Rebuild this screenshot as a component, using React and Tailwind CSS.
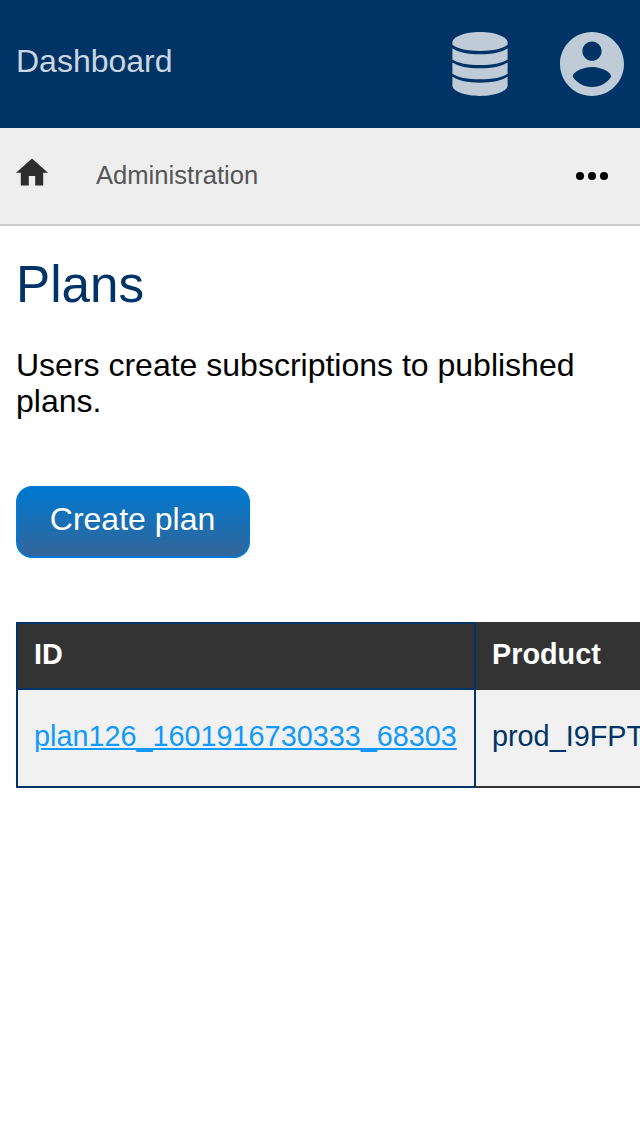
function DatabaseIcon() {
  return (
    <svg className="h-16 w-14" viewBox="0 0 56 64" fill="currentColor" aria-hidden="true">
      <path d="M.4 10.500C.4 5 12.500.1 28 .1S55.600 5 55.600 10.500v2.300C50 16.900 40.500 19 28 19S6 16.900.4 12.800z" />
      <path d="M.4 16.200C6 20.200 16 22.300 28 22.300s22-2.100 27.600-6.100v11.300C50 31.200 40.500 33 28 33S6 31.200 .4 27.500z" />
      <path d="M.4 30.400C6 34.300 16 36.300 28 36.300s22-2 27.600-5.900v11.300C50 45.500 40.500 47.300 28 47.300S6 45.500.4 41.700z" />
      <path d="M.4 44.800C6 48.600 16 50.700 28 50.700s22-2.100 27.600-5.900v8.700C55.600 59 43.500 63.900 28 63.900S.4 59 .4 53.500z" />
    </svg>
  );
}

function AccountIcon() {
  return (
    <svg className="size-16" viewBox="2 2 20 20" fill="currentColor" aria-hidden="true">
      <path d="M12 2C6.480 2 2 6.480 2 12s4.480 10 10 10 10-4.480 10-10S17.520 2 12 2zm0 3c1.660 0 3 1.340 3 3s-1.340 3-3 3-3-1.340-3-3 1.340-3 3-3zm0 14.200c-2.500 0-4.710-1.280-6-3.220.03-1.990 4-3.080 6-3.080 1.990 0 5.970 1.090 6 3.080-1.290 1.940-3.500 3.220-6 3.220z" />
    </svg>
  );
}

function HomeIcon() {
  return (
    <svg className="h-7 w-8" viewBox="2 2.75 20 17.5" fill="currentColor" aria-hidden="true">
      <path d="M10 20v-6h4v6h5v-8h3L12 3 2 12h3v8z" />
    </svg>
  );
}

function MoreIcon() {
  return (
    <svg className="h-2 w-8" viewBox="0 0 32 8" fill="currentColor" aria-hidden="true">
      <circle cx="4" cy="4" r="4" />
      <circle cx="16" cy="4" r="4" />
      <circle cx="28" cy="4" r="4" />
    </svg>
  );
}

export default function App() {
  return (
    <div className="min-h-screen w-full overflow-hidden bg-white font-['Liberation_Sans',Arial,sans-serif] text-black">
      <header className="flex h-32 items-start justify-between bg-[#003366] px-4 text-[#bfccd8]">
        <a href="#" className="mt-[43px] text-[32px] leading-9 text-[#ccd6e0]">Dashboard</a>
        <div className="mt-8 flex gap-[52px]">
          <DatabaseIcon />
          <AccountIcon />
        </div>
      </header>

      <nav className="flex h-[98px] items-start border-b-2 border-[#cccccc] bg-[#eeeeee] pl-4 pr-8">
        <a href="#" aria-label="Home" className="mt-[30px] text-[#2d2d2d]">
          <HomeIcon />
        </a>
        <a href="#" className="ml-12 mt-[33px] text-[25.6px] leading-7 text-[#555555]">Administration</a>
        <button aria-label="More" className="ml-auto mt-11">
          <MoreIcon />
        </button>
      </nav>

      <main className="pl-4 pt-[29px]">
        <h1 className="text-[51.2px] leading-[60px] text-[#003366]">Plans</h1>
        <p className="mt-8 pr-4 text-[32px] leading-9">Users create subscriptions to published plans.</p>
        <button className="mt-[67px] block h-[72px] w-[234px] rounded-2xl border-2 border-[#0078d4] bg-linear-to-b/srgb from-[#0078d0] to-[#336699] pr-px pb-1.5 text-[32px] leading-9 text-white">
          Create plan
        </button>

        <table className="mt-16 w-[1100px] table-fixed border-separate border-spacing-0 text-left text-[28.8px] leading-8">
          <thead>
            <tr className="h-[68px] bg-[#333333] text-white">
              <th className="w-[460px] border-2 border-[#003366] px-4 pb-1 font-bold">ID</th>
              <th className="border-y-2 border-[#333333] px-4 pb-1 font-bold">Product</th>
            </tr>
          </thead>
          <tbody>
            <tr className="h-[98px] bg-[#f1f1f1] text-[#003366]">
              <td className="border-x-2 border-b-2 border-[#003366] px-4 pb-1">
                <a href="#" className="text-[#1199ff] underline">plan126_1601916730333_68303</a>
              </td>
              <td className="border-b-2 border-[#333333] px-4 pb-1">prod_I9FPTx</td>
            </tr>
          </tbody>
        </table>
      </main>
    </div>
  );
}
